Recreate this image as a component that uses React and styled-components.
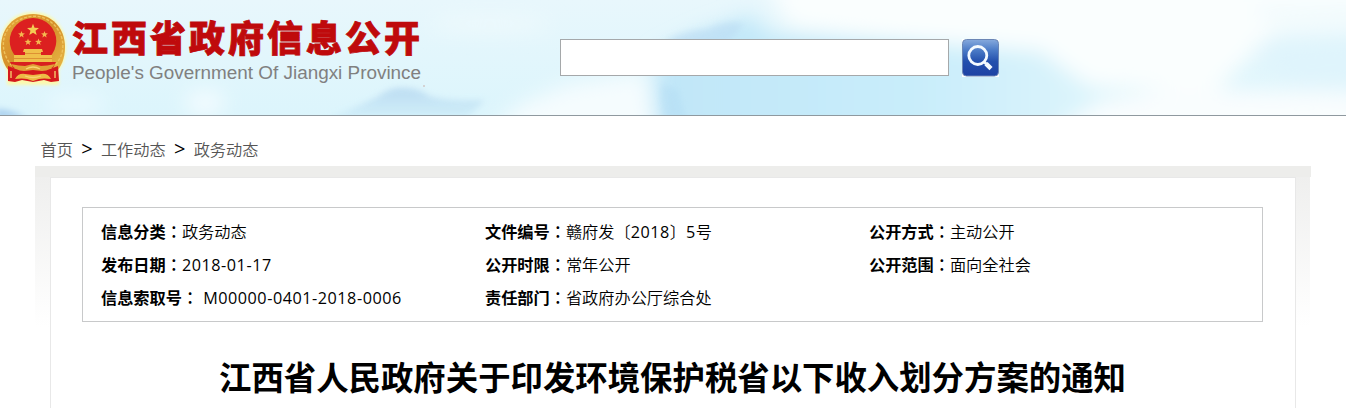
import React from 'react';
import styled, { createGlobalStyle } from 'styled-components';

const Global = createGlobalStyle`
  * { box-sizing: border-box; }
  body { margin: 0; background: #fff; overflow: hidden; }
`;
const Page = styled.div`
  width: 1346px; height: 408px; overflow: hidden; color: #000;
  font-family: "Open Sans", "Noto Sans CJK SC", sans-serif; font-size: 16.2px;
`;
const Header = styled.header`
  position: relative; height: 116px; border-bottom: 1px solid #8f999f; background: #e2f6fd;
  display: flex; align-items: flex-start;
`;
const Sky = styled.svg` position: absolute; inset: 0; `;
const Brand = styled.div` position: relative; display: flex; width: 560px; padding-top: 10px; `;
const EmblemSvg = styled.svg` flex: none; margin-left: -2px; `;
const Names = styled.div` margin-left: 2px; padding-top: 7px; white-space: nowrap; `;
const NameCn = styled.div`
  font: 900 36px/38px "Noto Sans CJK SC", sans-serif; letter-spacing: 3px; color: #bf0a0c;
  -webkit-text-stroke: 0.8px #bf0a0c;
`;
const NameEn = styled.div` margin-top: 6px; font: 18.9px/24px "Liberation Sans", sans-serif; color: #808080; `;
const Search = styled.form` position: relative; display: flex; gap: 13px; padding-top: 39px; `;
const Input = styled.input`
  width: 389px; height: 37px; margin: 0; border: 1px solid #a5a8aa; background: #fff; border-radius: 0;
`;
const SearchButton = styled.button` display: block; width: 37px; height: 38px; border: 0; padding: 0; background: #fff; `;
const Crumbs = styled.nav`
  display: flex; align-items: center; height: 50px; padding: 17px 0 0 40.5px; line-height: 30px;
`;
const Link = styled.a` font-weight: 350; color: #555; `;
const Arrow = styled.span` width: 28px; text-align: center; font-size: 20px; line-height: 28px; color: #000; padding-bottom: 2px; `;
const Frame = styled.main`
  width: 1276px; height: 242px; margin-left: 35px; padding: 11px 15px 0;
  background: linear-gradient(#ededeb, #ededeb) 0 0 / 100% 11px no-repeat,
    linear-gradient(#efefee, #fff) 0 11px / 1275px 150px no-repeat;
`;
const Sheet = styled.article` height: 231px; background: #fff; border: 1px solid #e8e8e8; border-bottom: 0; padding: 29px 32px 0 31px; `;
const Info = styled.dl`
  margin: 0; width: 1181px; height: 115px; border: 1px solid #c8c9ca; padding: 8px 0 0 18px;
  display: grid; grid-template-columns: 384px 384px 1fr; grid-auto-rows: 33px;
`;
const Item = styled.div` display: flex; line-height: 33px; white-space: nowrap; `;
const Label = styled.dt` font-weight: 700; line-height: 31px; `;
const Colon = styled.span` font-family: "Noto Sans CJK TC", sans-serif; font-weight: 500; `;
const Value = styled.dd` margin: 0 0 0 ${p => p.$gap || 0}px; font-weight: 350; `;
const Latin = styled.span` font-weight: 400; letter-spacing: 0.53px; `;
const Title = styled.h1`
  margin: 30px 0 0; text-align: center; font: 700 32.4px/48px "Noto Sans CJK SC", sans-serif; white-space: nowrap;
`;

const star = (cx, cy, r) => Array.from({ length: 10 }, (_, i) => {
  const a = -Math.PI / 2 + i * Math.PI / 5, q = i % 2 ? r * 0.42 : r;
  return `${cx + q * Math.cos(a)},${cy + q * Math.sin(a)}`;
}).join(' ');

function Emblem() {
  return (
    <EmblemSvg width="72" height="80" viewBox="-2 10 72 80">
      <defs>
        <filter id="glow" x="-20%" y="-20%" width="140%" height="140%"><feGaussianBlur stdDeviation="1.8" /></filter>
        <linearGradient id="gold" x2="1" y2="1"><stop stopColor="#e5a73a" /><stop offset=".5" stopColor="#d5902a" /><stop offset="1" stopColor="#e8b947" /></linearGradient>
      </defs>
      <path d="M33 12C13 12 0 27 0 47c0 12 4 19 7 23v15h52V70c4-5 7-12 7-23C66 27 53 12 33 12Z" fill="#fbf9ae" filter="url(#glow)" />
      <path d="M33 14C14 14 1 28 1 47c0 12 4 20 9 25h46c5-5 9-13 9-25C65 28 52 14 33 14Z" fill="url(#gold)" />
      <path d="M12 66C-2 50 2 29 17 21s29-6 39 6 9 29-2 39" fill="none" stroke="#efc35c" strokeWidth="1.4" strokeDasharray="3 1.6" />
      <ellipse cx="33" cy="41" rx="23.3" ry="23" fill="#dc2020" />
      <path d="M10 62h46l-3 6H13Z" fill="#d8201f" />
      <path d="M8 66l8 3 10-1 7 2 7-2 10 1 8-3 1 15-8 1-7-2-11 2-11-2-7 2-7-1Z" fill="#d4191c" />
      <polygon points={star(33, 30, 6.3)} fill="#f4cc55" />
      <polygon points={star(21.5, 34.5, 3.6)} fill="#f4b850" />
      <polygon points={star(44.5, 34.5, 3.6)} fill="#f4b850" />
      <polygon points={star(28, 42, 3.6)} fill="#f4b850" />
      <polygon points={star(38.5, 42, 3.6)} fill="#f4b850" />
      <path d="M24 49h18l1 3h-2v3h11v7H14v-7h11v-3h-2Z" fill="#f0c04a" />
      <path d="M14 58.5h38M25 53.5h16" stroke="#d8852d" strokeWidth=".8" />
      <path d="M11 64q8 2 14 2l8-2 8 2q6 0 14-2-4 7-13 7l-9-1-9 1q-9 0-13-7Z" fill="#e0a236" />
      <path d="M15 79q3-6 10-5l8 1 8-1q7-1 10 5-7-1-12 0l-6 2-6-2q-5-1-12 0Z" fill="#edba45" />
      <path d="M26 69q7-4 14 0M25 76q8 3 16 0M11 71v7M55 71v7" stroke="#f7d671" strokeWidth="1.3" fill="none" />
    </EmblemSvg>
  );
}

function Clouds() {
  return (
    <Sky width="1346" height="115" viewBox="0 0 1346 115">
      <defs>
        <linearGradient id="sky" x2="0" y2="1"><stop stopColor="#e8f7fc" /><stop offset="1" stopColor="#dcf5fc" /></linearGradient>
        <filter id="b3" x="-30%" y="-60%" width="160%" height="220%"><feGaussianBlur stdDeviation="3" /></filter>
        <filter id="b10" x="-30%" y="-80%" width="160%" height="260%"><feGaussianBlur stdDeviation="10" /></filter>
        <linearGradient id="hill" x2="0" y2="1"><stop stopColor="#b6d8f0" /><stop offset="1" stopColor="#d2f0fa" /></linearGradient>
        <linearGradient id="lake" x2="1"><stop stopColor="#c0e6f8" /><stop offset=".5" stopColor="#c9edfa" /><stop offset="1" stopColor="#e8f9fd" /></linearGradient>
      </defs>
      <rect width="1346" height="115" fill="url(#sky)" />
      <g filter="url(#b10)">
        <path d="M656 140V55l44-22 50-18 20 20 80 5 140 2 110 20 90 20-60 5-80 53Z" fill="url(#lake)" />
        <path d="M765-20h640v46l-130 5-60 60-125-5-50-35-140-10-110-14Z" fill="#fafefe" />
        <path d="M1252 46l114-6v44l-70 6Z" fill="#dff4fc" />
        <path d="M1250 10l110-2v10h-90Z" fill="#e9f8fc" />
        <path d="M480 140l40-36 50-20 75-12 14 68Z" fill="#f5fcfe" />
        <path d="M1040 140l60-38 70-14 196 4v48Z" fill="#f9fdfe" />
        <ellipse cx="75" cy="105" rx="30" ry="9" fill="#edfaff" />
        <ellipse cx="205" cy="103" rx="20" ry="12" fill="#f4fcff" />
        <ellipse cx="490" cy="24" rx="60" ry="7" fill="#f0fafd" />
      </g>
      <path d="M325 120q34-14 52-23 14-11 28-9 14 0 24 8 20 6 56 4l-20 20Z" fill="url(#hill)" opacity=".85" filter="url(#b3)" />
      <path d="M664 42q18-12 44-13 18-10 36-5l-14 16-40 8Z" fill="#b9daf3" opacity=".55" filter="url(#b3)" />
      <path d="M662 84q-4 10 2 34l22 2-8-30Z" fill="#acd8f2" opacity=".35" filter="url(#b3)" />
      <path d="M-4 109q18 1 30 9H-4Z" fill="#a9cfee" filter="url(#b3)" />
      <circle cx="424" cy="86" r=".8" fill="#c9a9a0" />
    </Sky>
  );
}

const rows = [
  { label: '信息分类', value: '政务动态' },
  { label: '文件编号', value: <>赣府发〔<Latin>2018</Latin>〕<Latin>5</Latin>号</> },
  { label: '公开方式', value: '主动公开' },
  { label: '发布日期', value: <Latin>2018-01-17</Latin> },
  { label: '公开时限', value: '常年公开' },
  { label: '公开范围', value: '面向全社会' },
  { label: '信息索取号', value: <Latin>M00000-0401-2018-0006</Latin>, gap: 5 },
  { label: '责任部门', value: '省政府办公厅综合处' },
];

export default function App() {
  return (
    <Page>
      <Global />
      <Header>
        <Clouds />
        <Brand>
          <Emblem />
          <Names>
            <NameCn>江西省政府信息公开</NameCn>
            <NameEn>People's Government Of Jiangxi Province</NameEn>
          </Names>
        </Brand>
        <Search>
          <Input aria-label="搜索" />
          <SearchButton type="button" aria-label="搜索">
            <svg width="37" height="38" viewBox="0 0 37 38">
              <defs><linearGradient id="btn" x2="0" y2="1"><stop stopColor="#86aadd" /><stop offset=".3" stopColor="#4a7ac6" /><stop offset=".6" stopColor="#2350ad" /><stop offset="1" stopColor="#1d41a3" /></linearGradient></defs>
              <rect x=".5" y=".5" width="36" height="36.5" rx="4" fill="url(#btn)" stroke="#6b86b5" />
              <circle cx="15.8" cy="16.5" r="9" fill="none" stroke="#f4faff" strokeWidth="2.8" />
              <path d="M22.3 23l2 2" stroke="#f4faff" strokeWidth="3" />
              <path d="M24 24.6l5 5" stroke="#f4faff" strokeWidth="4.4" />
            </svg>
          </SearchButton>
        </Search>
      </Header>
      <Crumbs>
        <Link>首页</Link><Arrow>&gt;</Arrow><Link>工作动态</Link><Arrow>&gt;</Arrow><Link>政务动态</Link>
      </Crumbs>
      <Frame>
        <Sheet>
          <Info>
            {rows.map(r => (
              <Item key={r.label}>
                <Label>{r.label}<Colon>：</Colon></Label>
                <Value $gap={r.gap}>{r.value}</Value>
              </Item>
            ))}
          </Info>
          <Title>江西省人民政府关于印发环境保护税省以下收入划分方案的通知</Title>
        </Sheet>
      </Frame>
    </Page>
  );
}
